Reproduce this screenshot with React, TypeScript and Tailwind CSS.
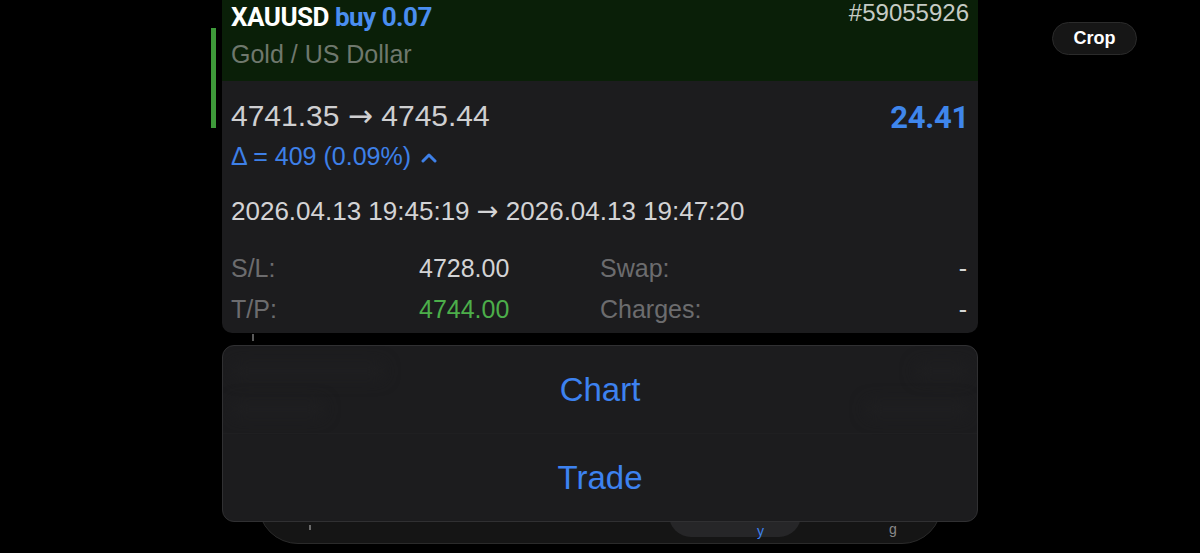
import React from 'react';

const sans = "font-['Liberation_Sans',Arial,sans-serif]";
const cond = "font-['Roboto','Liberation_Sans',sans-serif]";

function Arrow() {
  return <span className="font-['DejaVu_Sans',sans-serif]">→</span>;
}

function Row({ label, value, valueClass, label2 }: { label: string; value: string; valueClass: string; label2: string }) {
  return (
    <div className="flex items-center h-[41px] text-[25px]">
      <span className="w-[188px] text-[#6c6c6e]">{label}</span>
      <span className={`w-[181px] ${valueClass}`}>{value}</span>
      <span className="flex-1 text-[#6c6c6e]">{label2}</span>
      <span className="text-[#d6d6d6] pr-[2px]">-</span>
    </div>
  );
}

export default function App() {
  return (
    <div className={`relative h-[553px] w-[1200px] bg-black overflow-hidden ${sans}`}>
      {/* Crop */}
      <div className="absolute left-[1052px] top-[22px] h-[33px] w-[85px] rounded-full bg-[#161616] border border-[#2b2b2b] flex items-center justify-center text-white font-bold text-[18px]">
        Crop
      </div>

      <div className="ml-[222px] w-[756px] flex flex-col">
        {/* position card */}
        <div className="relative">
          <div className="absolute -left-[11px] top-[28px] w-[5px] h-[100px] bg-[#3e9a3a]" />
          <div className="bg-[#0a1f08] h-[81px] px-[9px] flex flex-col">
            <div className="flex items-start justify-between h-[36px]">
              <div className={`${cond} font-bold text-[26px] leading-[34px] tracking-[-0.5px]`}>
                <span className="text-white">XAUUSD</span>
                <span className="text-[#4a8ef0]"> buy 0.07</span>
              </div>
              <div className="text-[24px] leading-[26px] text-[#c6cbc4]">#59055926</div>
            </div>
            <div className="text-[25px] leading-[36px] text-[#6f786d]">Gold / US Dollar</div>
          </div>
          <div className="bg-[#1c1c1e] rounded-b-[10px] px-[9px] pb-[3px]">
            <div className="flex items-center justify-between h-[66px] pt-[2px]">
              <span className="text-[30px] text-[#cfcfd1]">
                4741.35 <Arrow /> 4745.44
              </span>
              <span className={`${cond} font-bold text-[31px] text-[#3f86ec] tracking-[-0.3px] pt-[6px]`}>24.41</span>
            </div>
            <div className="flex items-center h-[20px] text-[25px] text-[#3e80e8] gap-[10px]">
              <span>Δ = 409 (0.09%)</span>
              <svg width="16" height="12" viewBox="0 0 16 12" className="mt-[2px]">
                <polyline points="2,9 8,3 14,9" fill="none" stroke="#3e80e8" strokeWidth="3" strokeLinecap="round" strokeLinejoin="round" />
              </svg>
            </div>
            <div className="h-[81px] pt-[30px] leading-[28px] text-[26px] text-[#d3d3d5]">
              2026.04.13 19:45:19 <Arrow /> 2026.04.13 19:47:20
            </div>
            <Row label="S/L:" value="4728.00" valueClass="text-[#d3d3d5]" label2="Swap:" />
            <Row label="T/P:" value="4744.00" valueClass="text-[#4cae4a]" label2="Charges:" />
          </div>
        </div>

        {/* blurred edge of the list behind */}
        <div className="h-[12px] pl-[30px]">
          <div className="w-[2px] h-[7px] bg-[#5a5a5a] mt-[1px] blur-[0.5px]" />
        </div>

        {/* action menu */}
        <div className="relative z-10 h-[177px] rounded-[12px] bg-[#1c1c1e] border border-[#303032] flex flex-col overflow-hidden">
          <div className="absolute left-[10px] top-[18px] w-[150px] h-[14px] rounded bg-[#1f1f21] blur-[8px]" />
          <div className="absolute left-[10px] top-[56px] w-[90px] h-[14px] rounded bg-[#1f1f21] blur-[8px]" />
          <div className="absolute right-[10px] top-[18px] w-[50px] h-[14px] rounded bg-[#1f1f21] blur-[8px]" />
          <div className="absolute right-[10px] top-[56px] w-[100px] h-[14px] rounded bg-[#1f1f21] blur-[8px]" />
          <div className="relative flex-1 flex items-center justify-center text-[33px] text-[#3d82f0] border-b border-[#1f1f21]">
            Chart
          </div>
          <div className="relative flex-1 flex items-center justify-center text-[33px] text-[#3d82f0]">
            Trade
          </div>
        </div>

        {/* tab bar behind the menu */}
        <div className="relative -mt-[24px] mx-[36px] h-[46px] rounded-b-[40px] bg-[#151515] border border-[#2a2a2a]">
          <div className="absolute left-[410px] top-0 w-[132px] h-[38px] rounded-b-[22px] bg-[#262628]" />
          <div className="absolute left-[50px] top-[26px] w-[2px] h-[5px] bg-[#6a6a6a]" />
          <div className="absolute left-[498px] top-[22px] text-[14px] text-[#3d82f0]">y</div>
          <div className="absolute left-[630px] top-[20px] text-[14px] text-[#8a8a8a]">g</div>
        </div>
      </div>
    </div>
  );
}
